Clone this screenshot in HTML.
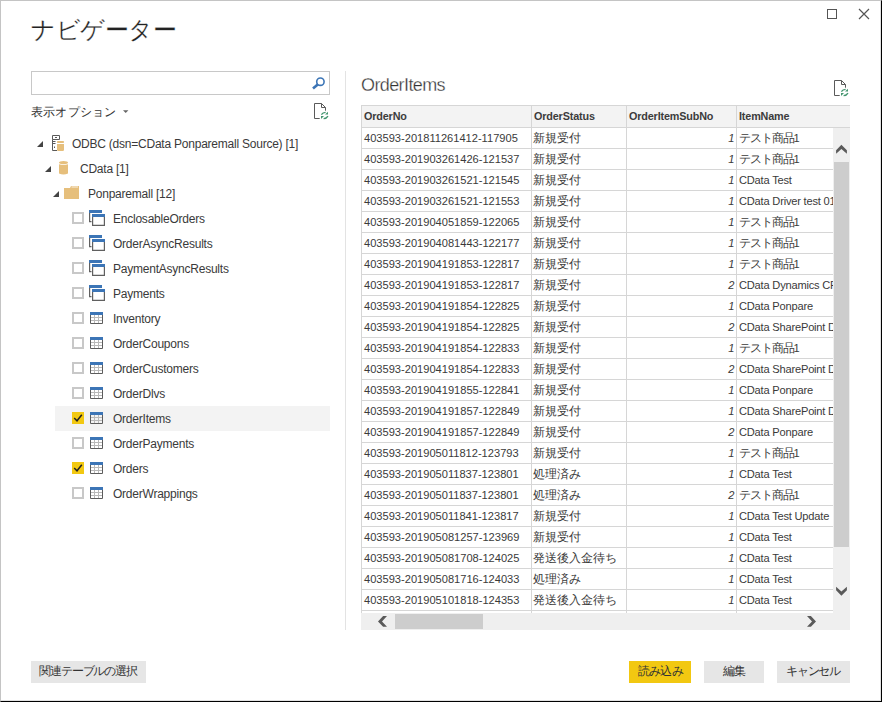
<!DOCTYPE html>
<html><head><meta charset="utf-8"><style>
*{margin:0;padding:0;box-sizing:border-box}
html,body{width:882px;height:702px;overflow:hidden;background:#fff}
body{position:relative;font-family:"Liberation Sans",sans-serif;color:#333}
.a{position:absolute}
.frame{position:absolute;left:0;top:0;width:882px;height:702px;border-top:1px solid #c4c4c4;border-left:1px solid #c4c4c4;border-right:1px solid #000;border-bottom:1px solid #000}
.title{position:absolute;left:31px;top:13px;font-size:23.8px;letter-spacing:-0.5px;line-height:34px;color:#222;-webkit-text-stroke:0.25px #fff;white-space:nowrap}
.search{position:absolute;left:31px;top:71px;width:299px;height:24px;border:1px solid #c8c8c8}
.opt{position:absolute;left:31px;top:103px;font-size:12px;letter-spacing:0.2px;line-height:18px;color:#333;white-space:nowrap}
.divider{position:absolute;left:345px;top:71px;width:1px;height:559px;background:#e3e3e3}
.tri{position:absolute;width:6px;height:6px;line-height:0}
.ic{position:absolute;line-height:0}
.tt{position:absolute;font-size:12px;line-height:25px;letter-spacing:-0.23px;margin-top:1px;color:#3a3a3a;white-space:nowrap}
.cb{position:absolute;left:72px;width:12px;height:12px;border:2px solid #c8c8c8;background:#fff;line-height:0}
.cb.on{border:none;background:#f2c811}
.sel{position:absolute;left:55px;width:275px;height:25px;background:#f3f3f3}
.ptitle{position:absolute;left:361px;top:75px;font-size:18px;line-height:20px;letter-spacing:-0.6px;color:#333;-webkit-text-stroke:0.3px #fff;white-space:nowrap}
.tblwrap{position:absolute;left:0;top:0;width:882px;height:702px;overflow:hidden}
.clip{position:absolute;left:361px;top:105px;width:472px;height:508px;overflow:hidden}
.clip > div{position:absolute}
.th{top:0;font-size:10.8px;letter-spacing:-0.15px;font-weight:bold;line-height:22px;color:#3c3c3c;white-space:nowrap}
.td{font-size:11.1px;line-height:21px;margin-top:1px;color:#3a3a3a;white-space:nowrap}
.num{text-align:right;font-style:italic}
.jp{font-size:12.4px}
.jk{font-size:12.4px;letter-spacing:-1.1px}
.it{letter-spacing:-0.2px}
.hl{left:0;width:472px;height:1px;background:#d6d6d6}
.vl{top:0;width:1px;height:508px;background:#d6d6d6}
.vsb{position:absolute;left:833px;top:128px;width:17px;height:502px;background:#efefef}
.vthumb{position:absolute;left:834px;top:162px;width:15px;height:385px;background:#cdcdcd}
.hsb{position:absolute;left:361px;top:613px;width:472px;height:17px;background:#efefef}
.hthumb{position:absolute;left:395px;top:614px;width:88px;height:15px;background:#cdcdcd}
.btn{position:absolute;top:661px;height:22px;background:#e6e6e6;font-size:11.8px;line-height:21px;letter-spacing:-0.7px;text-indent:0.5px;text-align:center;color:#333;white-space:nowrap}
.btn.y{background:#f2c811}
</style></head><body>
<div class="frame"></div>
<div class="a" style="left:880px;top:1px;width:1px;height:700px;background:#e2e2e2"></div>
<div class="a" style="left:1px;top:700px;width:880px;height:1px;background:#e2e2e2"></div>
<div class="title">ナビゲーター</div>
<div class="a" style="left:827px;top:9px;width:10px;height:10px;border:1px solid #555"></div>
<div class="a" style="left:858px;top:8px;line-height:0"><svg width="12" height="12" viewBox="0 0 12 12"><path d="M1 1L11 11M11 1L1 11" stroke="#555" stroke-width="1.2"/></svg></div>
<div class="search"></div>
<div class="a" style="left:311px;top:76px;line-height:0"><svg width="14" height="14" viewBox="0 0 14 14"><circle cx="9.4" cy="5.7" r="3.7" stroke="#3c75b6" stroke-width="1.6" fill="none"/><path d="M7 8.2L2 12.6" stroke="#3c75b6" stroke-width="2.6"/></svg></div>
<div class="opt">表示オプション</div>
<div class="a" style="left:123px;top:109px;line-height:0"><svg width="6" height="4" viewBox="0 0 6 4"><path d="M0 0.2H5.4L2.7 2.9Z" fill="#666"/></svg></div>
<div class="a" style="left:313px;top:102px;line-height:0"><svg width="16" height="18" viewBox="0 0 16 18"><path d="M6.7 16.5H1.5V1.5H8.5L12.5 5.5V8.7" stroke="#5a5a5a" stroke-width="1" fill="none"/><path d="M8.5 1.5V5.5H12.5" stroke="#5a5a5a" stroke-width="1" fill="none"/><path d="M8.4 12.6Q9.8 10.3 12.6 10.3" stroke="#43956f" stroke-width="1.3" fill="none"/><path d="M12 12.6H15V9.8Z" fill="#43956f"/><path d="M15 14.2Q13.6 16.6 10.6 16.6" stroke="#43956f" stroke-width="1.3" fill="none"/><path d="M8 14V17L11 14Z" fill="#43956f"/></svg></div>
<div class="divider"></div>
<div class="tri" style="left:37px;top:141px"><svg width="6" height="6" viewBox="0 0 6 6"><path d="M6 0V6H0Z" fill="#444"/></svg></div><div class="ic" style="left:52px;top:135px"><svg width="13" height="16" viewBox="0 0 13 16">
<path d="M0.5 0.5H7.5V4.5H0.5Z M0.5 4.5V15.5H5" stroke="#5a5a5a" stroke-width="1" fill="none"/>
<path d="M3 2.5H5" stroke="#5a5a5a" stroke-width="1"/>
<path d="M1 6.5H3.5M1 8.5H3.5" stroke="#5a5a5a" stroke-width="1"/>
<path d="M2.5 11.5V13" stroke="#5a5a5a" stroke-width="1"/>
<rect x="5" y="6" width="7" height="2" rx="0.8" fill="#e6bf7c"/>
<path d="M5 9H12V14.8Q12 16 10.8 16H6.2Q5 16 5 14.8Z" fill="#e6bf7c"/>
</svg></div><div class="tt" style="left:72px;top:131px">ODBC (dsn=CData Ponparemall Source) [1]</div><div class="tri" style="left:45px;top:166px"><svg width="6" height="6" viewBox="0 0 6 6"><path d="M6 0V6H0Z" fill="#444"/></svg></div><div class="ic" style="left:59px;top:161px"><svg width="9" height="14" viewBox="0 0 9 14">
<ellipse cx="4.5" cy="1.6" rx="4.5" ry="1.6" fill="#e6bf7c"/>
<path d="M0 3.2Q4.5 4.6 9 3.2V12.4Q4.5 14.4 0 12.4Z" fill="#e6bf7c"/>
</svg></div><div class="tt" style="left:80px;top:156px">CData [1]</div><div class="tri" style="left:53px;top:191px"><svg width="6" height="6" viewBox="0 0 6 6"><path d="M6 0V6H0Z" fill="#444"/></svg></div><div class="ic" style="left:64px;top:186px"><svg width="15" height="13" viewBox="0 0 15 13">
<path d="M0 2H6L7 0H15V13H0Z" fill="#e6bf7c"/>
<path d="M7.5 1H14" stroke="#fff" stroke-width="0.8"/>
</svg></div><div class="tt" style="left:88px;top:181px">Ponparemall [12]</div><div class="cb" style="top:212px"></div><div class="ic" style="left:89px;top:210px"><svg width="17" height="17" viewBox="0 0 17 17"><rect x="0" y="0" width="13" height="3" fill="#3c75b6"/><path d="M0.6 3V11.6H2.5" stroke="#606060" stroke-width="1.2" fill="none"/><rect x="3" y="4" width="13" height="3" fill="#3c75b6"/><path d="M3.6 7V15.4H15.4V7" stroke="#606060" stroke-width="1.2" fill="none"/></svg></div><div class="tt" style="left:113px;top:206px">EnclosableOrders</div><div class="cb" style="top:237px"></div><div class="ic" style="left:89px;top:235px"><svg width="17" height="17" viewBox="0 0 17 17"><rect x="0" y="0" width="13" height="3" fill="#3c75b6"/><path d="M0.6 3V11.6H2.5" stroke="#606060" stroke-width="1.2" fill="none"/><rect x="3" y="4" width="13" height="3" fill="#3c75b6"/><path d="M3.6 7V15.4H15.4V7" stroke="#606060" stroke-width="1.2" fill="none"/></svg></div><div class="tt" style="left:113px;top:231px">OrderAsyncResults</div><div class="cb" style="top:262px"></div><div class="ic" style="left:89px;top:260px"><svg width="17" height="17" viewBox="0 0 17 17"><rect x="0" y="0" width="13" height="3" fill="#3c75b6"/><path d="M0.6 3V11.6H2.5" stroke="#606060" stroke-width="1.2" fill="none"/><rect x="3" y="4" width="13" height="3" fill="#3c75b6"/><path d="M3.6 7V15.4H15.4V7" stroke="#606060" stroke-width="1.2" fill="none"/></svg></div><div class="tt" style="left:113px;top:256px">PaymentAsyncResults</div><div class="cb" style="top:287px"></div><div class="ic" style="left:89px;top:285px"><svg width="17" height="17" viewBox="0 0 17 17"><rect x="0" y="0" width="13" height="3" fill="#3c75b6"/><path d="M0.6 3V11.6H2.5" stroke="#606060" stroke-width="1.2" fill="none"/><rect x="3" y="4" width="13" height="3" fill="#3c75b6"/><path d="M3.6 7V15.4H15.4V7" stroke="#606060" stroke-width="1.2" fill="none"/></svg></div><div class="tt" style="left:113px;top:281px">Payments</div><div class="cb" style="top:312px"></div><div class="ic" style="left:90px;top:312px"><svg width="13" height="12" viewBox="0 0 13 12"><rect x="0" y="0" width="13" height="3" fill="#3c75b6"/><path d="M4.5 3V11M8.5 3V11M1 5.5H12M1 8.5H12" stroke="#b9b9b9" stroke-width="1" fill="none"/><path d="M0.5 3V11.5H12.5V3" stroke="#5c5c5c" stroke-width="1" fill="none"/></svg></div><div class="tt" style="left:113px;top:306px">Inventory</div><div class="cb" style="top:337px"></div><div class="ic" style="left:90px;top:337px"><svg width="13" height="12" viewBox="0 0 13 12"><rect x="0" y="0" width="13" height="3" fill="#3c75b6"/><path d="M4.5 3V11M8.5 3V11M1 5.5H12M1 8.5H12" stroke="#b9b9b9" stroke-width="1" fill="none"/><path d="M0.5 3V11.5H12.5V3" stroke="#5c5c5c" stroke-width="1" fill="none"/></svg></div><div class="tt" style="left:113px;top:331px">OrderCoupons</div><div class="cb" style="top:362px"></div><div class="ic" style="left:90px;top:362px"><svg width="13" height="12" viewBox="0 0 13 12"><rect x="0" y="0" width="13" height="3" fill="#3c75b6"/><path d="M4.5 3V11M8.5 3V11M1 5.5H12M1 8.5H12" stroke="#b9b9b9" stroke-width="1" fill="none"/><path d="M0.5 3V11.5H12.5V3" stroke="#5c5c5c" stroke-width="1" fill="none"/></svg></div><div class="tt" style="left:113px;top:356px">OrderCustomers</div><div class="cb" style="top:387px"></div><div class="ic" style="left:90px;top:387px"><svg width="13" height="12" viewBox="0 0 13 12"><rect x="0" y="0" width="13" height="3" fill="#3c75b6"/><path d="M4.5 3V11M8.5 3V11M1 5.5H12M1 8.5H12" stroke="#b9b9b9" stroke-width="1" fill="none"/><path d="M0.5 3V11.5H12.5V3" stroke="#5c5c5c" stroke-width="1" fill="none"/></svg></div><div class="tt" style="left:113px;top:381px">OrderDlvs</div><div class="sel" style="top:406px"></div><div class="cb on" style="top:412px"><svg width="12" height="12" viewBox="0 0 12 12"><path d="M2.2 6L5 8.8L9.8 2.7" stroke="#222" stroke-width="1.5" fill="none"/></svg></div><div class="ic" style="left:90px;top:412px"><svg width="13" height="12" viewBox="0 0 13 12"><rect x="0" y="0" width="13" height="3" fill="#3c75b6"/><path d="M4.5 3V11M8.5 3V11M1 5.5H12M1 8.5H12" stroke="#b9b9b9" stroke-width="1" fill="none"/><path d="M0.5 3V11.5H12.5V3" stroke="#5c5c5c" stroke-width="1" fill="none"/></svg></div><div class="tt" style="left:113px;top:406px">OrderItems</div><div class="cb" style="top:437px"></div><div class="ic" style="left:90px;top:437px"><svg width="13" height="12" viewBox="0 0 13 12"><rect x="0" y="0" width="13" height="3" fill="#3c75b6"/><path d="M4.5 3V11M8.5 3V11M1 5.5H12M1 8.5H12" stroke="#b9b9b9" stroke-width="1" fill="none"/><path d="M0.5 3V11.5H12.5V3" stroke="#5c5c5c" stroke-width="1" fill="none"/></svg></div><div class="tt" style="left:113px;top:431px">OrderPayments</div><div class="cb on" style="top:462px"><svg width="12" height="12" viewBox="0 0 12 12"><path d="M2.2 6L5 8.8L9.8 2.7" stroke="#222" stroke-width="1.5" fill="none"/></svg></div><div class="ic" style="left:90px;top:462px"><svg width="13" height="12" viewBox="0 0 13 12"><rect x="0" y="0" width="13" height="3" fill="#3c75b6"/><path d="M4.5 3V11M8.5 3V11M1 5.5H12M1 8.5H12" stroke="#b9b9b9" stroke-width="1" fill="none"/><path d="M0.5 3V11.5H12.5V3" stroke="#5c5c5c" stroke-width="1" fill="none"/></svg></div><div class="tt" style="left:113px;top:456px">Orders</div><div class="cb" style="top:487px"></div><div class="ic" style="left:90px;top:487px"><svg width="13" height="12" viewBox="0 0 13 12"><rect x="0" y="0" width="13" height="3" fill="#3c75b6"/><path d="M4.5 3V11M8.5 3V11M1 5.5H12M1 8.5H12" stroke="#b9b9b9" stroke-width="1" fill="none"/><path d="M0.5 3V11.5H12.5V3" stroke="#5c5c5c" stroke-width="1" fill="none"/></svg></div><div class="tt" style="left:113px;top:481px">OrderWrappings</div>
<div class="ptitle">OrderItems</div>
<div class="a" style="left:833px;top:79px;line-height:0"><svg width="16" height="18" viewBox="0 0 16 18"><path d="M6.7 16.5H1.5V1.5H8.5L12.5 5.5V8.7" stroke="#5a5a5a" stroke-width="1" fill="none"/><path d="M8.5 1.5V5.5H12.5" stroke="#5a5a5a" stroke-width="1" fill="none"/><path d="M8.4 12.6Q9.8 10.3 12.6 10.3" stroke="#43956f" stroke-width="1.3" fill="none"/><path d="M12 12.6H15V9.8Z" fill="#43956f"/><path d="M15 14.2Q13.6 16.6 10.6 16.6" stroke="#43956f" stroke-width="1.3" fill="none"/><path d="M8 14V17L11 14Z" fill="#43956f"/></svg></div>
<div class="a" style="left:361px;top:105px;width:489px;height:23px;background:#f3f3f3;border-top:1px solid #d6d6d6;border-bottom:1px solid #d6d6d6"></div>
<div class="clip">
<div class="hl" style="top:22px"></div><div class="hl" style="top:43px"></div><div class="hl" style="top:64px"></div><div class="hl" style="top:85px"></div><div class="hl" style="top:106px"></div><div class="hl" style="top:127px"></div><div class="hl" style="top:148px"></div><div class="hl" style="top:169px"></div><div class="hl" style="top:190px"></div><div class="hl" style="top:211px"></div><div class="hl" style="top:232px"></div><div class="hl" style="top:253px"></div><div class="hl" style="top:274px"></div><div class="hl" style="top:295px"></div><div class="hl" style="top:316px"></div><div class="hl" style="top:337px"></div><div class="hl" style="top:358px"></div><div class="hl" style="top:379px"></div><div class="hl" style="top:400px"></div><div class="hl" style="top:421px"></div><div class="hl" style="top:442px"></div><div class="hl" style="top:463px"></div><div class="hl" style="top:484px"></div><div class="hl" style="top:505px"></div><div class="vl" style="left:0px"></div><div class="vl" style="left:170px"></div><div class="vl" style="left:265px"></div><div class="vl" style="left:375px"></div>
<div class="th" style="left:3px">OrderNo</div><div class="th" style="left:173px">OrderStatus</div><div class="th" style="left:268px">OrderItemSubNo</div><div class="th" style="left:378px">ItemName</div><div class="td" style="left:3px;top:22px">403593-201811261412-117905</div><div class="td jp" style="left:172px;top:22px">新規受付</div><div class="td num" style="left:265px;width:108.5px;top:22px">1</div><div class="td it" style="left:378px;top:22px"><span class="jk">テスト商品</span>1</div><div class="td" style="left:3px;top:43px">403593-201903261426-121537</div><div class="td jp" style="left:172px;top:43px">新規受付</div><div class="td num" style="left:265px;width:108.5px;top:43px">1</div><div class="td it" style="left:378px;top:43px"><span class="jk">テスト商品</span>1</div><div class="td" style="left:3px;top:64px">403593-201903261521-121545</div><div class="td jp" style="left:172px;top:64px">新規受付</div><div class="td num" style="left:265px;width:108.5px;top:64px">1</div><div class="td it" style="left:378px;top:64px">CData Test</div><div class="td" style="left:3px;top:85px">403593-201903261521-121553</div><div class="td jp" style="left:172px;top:85px">新規受付</div><div class="td num" style="left:265px;width:108.5px;top:85px">1</div><div class="td it" style="left:378px;top:85px">CData Driver test 01</div><div class="td" style="left:3px;top:106px">403593-201904051859-122065</div><div class="td jp" style="left:172px;top:106px">新規受付</div><div class="td num" style="left:265px;width:108.5px;top:106px">1</div><div class="td it" style="left:378px;top:106px"><span class="jk">テスト商品</span>1</div><div class="td" style="left:3px;top:127px">403593-201904081443-122177</div><div class="td jp" style="left:172px;top:127px">新規受付</div><div class="td num" style="left:265px;width:108.5px;top:127px">1</div><div class="td it" style="left:378px;top:127px"><span class="jk">テスト商品</span>1</div><div class="td" style="left:3px;top:148px">403593-201904191853-122817</div><div class="td jp" style="left:172px;top:148px">新規受付</div><div class="td num" style="left:265px;width:108.5px;top:148px">1</div><div class="td it" style="left:378px;top:148px"><span class="jk">テスト商品</span>1</div><div class="td" style="left:3px;top:169px">403593-201904191853-122817</div><div class="td jp" style="left:172px;top:169px">新規受付</div><div class="td num" style="left:265px;width:108.5px;top:169px">2</div><div class="td it" style="left:378px;top:169px">CData Dynamics CRM</div><div class="td" style="left:3px;top:190px">403593-201904191854-122825</div><div class="td jp" style="left:172px;top:190px">新規受付</div><div class="td num" style="left:265px;width:108.5px;top:190px">1</div><div class="td it" style="left:378px;top:190px">CData Ponpare</div><div class="td" style="left:3px;top:211px">403593-201904191854-122825</div><div class="td jp" style="left:172px;top:211px">新規受付</div><div class="td num" style="left:265px;width:108.5px;top:211px">2</div><div class="td it" style="left:378px;top:211px">CData SharePoint D</div><div class="td" style="left:3px;top:232px">403593-201904191854-122833</div><div class="td jp" style="left:172px;top:232px">新規受付</div><div class="td num" style="left:265px;width:108.5px;top:232px">1</div><div class="td it" style="left:378px;top:232px"><span class="jk">テスト商品</span>1</div><div class="td" style="left:3px;top:253px">403593-201904191854-122833</div><div class="td jp" style="left:172px;top:253px">新規受付</div><div class="td num" style="left:265px;width:108.5px;top:253px">2</div><div class="td it" style="left:378px;top:253px">CData SharePoint D</div><div class="td" style="left:3px;top:274px">403593-201904191855-122841</div><div class="td jp" style="left:172px;top:274px">新規受付</div><div class="td num" style="left:265px;width:108.5px;top:274px">1</div><div class="td it" style="left:378px;top:274px">CData Ponpare</div><div class="td" style="left:3px;top:295px">403593-201904191857-122849</div><div class="td jp" style="left:172px;top:295px">新規受付</div><div class="td num" style="left:265px;width:108.5px;top:295px">1</div><div class="td it" style="left:378px;top:295px">CData SharePoint D</div><div class="td" style="left:3px;top:316px">403593-201904191857-122849</div><div class="td jp" style="left:172px;top:316px">新規受付</div><div class="td num" style="left:265px;width:108.5px;top:316px">2</div><div class="td it" style="left:378px;top:316px">CData Ponpare</div><div class="td" style="left:3px;top:337px">403593-201905011812-123793</div><div class="td jp" style="left:172px;top:337px">新規受付</div><div class="td num" style="left:265px;width:108.5px;top:337px">1</div><div class="td it" style="left:378px;top:337px"><span class="jk">テスト商品</span>1</div><div class="td" style="left:3px;top:358px">403593-201905011837-123801</div><div class="td jp" style="left:172px;top:358px">処理済み</div><div class="td num" style="left:265px;width:108.5px;top:358px">1</div><div class="td it" style="left:378px;top:358px">CData Test</div><div class="td" style="left:3px;top:379px">403593-201905011837-123801</div><div class="td jp" style="left:172px;top:379px">処理済み</div><div class="td num" style="left:265px;width:108.5px;top:379px">2</div><div class="td it" style="left:378px;top:379px"><span class="jk">テスト商品</span>1</div><div class="td" style="left:3px;top:400px">403593-201905011841-123817</div><div class="td jp" style="left:172px;top:400px">新規受付</div><div class="td num" style="left:265px;width:108.5px;top:400px">1</div><div class="td it" style="left:378px;top:400px">CData Test Update</div><div class="td" style="left:3px;top:421px">403593-201905081257-123969</div><div class="td jp" style="left:172px;top:421px">新規受付</div><div class="td num" style="left:265px;width:108.5px;top:421px">1</div><div class="td it" style="left:378px;top:421px">CData Test</div><div class="td" style="left:3px;top:442px">403593-201905081708-124025</div><div class="td jp" style="left:172px;top:442px">発送後入金待ち</div><div class="td num" style="left:265px;width:108.5px;top:442px">1</div><div class="td it" style="left:378px;top:442px">CData Test</div><div class="td" style="left:3px;top:463px">403593-201905081716-124033</div><div class="td jp" style="left:172px;top:463px">処理済み</div><div class="td num" style="left:265px;width:108.5px;top:463px">1</div><div class="td it" style="left:378px;top:463px">CData Test</div><div class="td" style="left:3px;top:484px">403593-201905101818-124353</div><div class="td jp" style="left:172px;top:484px">発送後入金待ち</div><div class="td num" style="left:265px;width:108.5px;top:484px">1</div><div class="td it" style="left:378px;top:484px">CData Test</div>
</div>
<div class="vsb"></div><div class="vthumb"></div>
<div class="hsb"></div><div class="hthumb"></div>
<div class="a" style="left:0;top:0;line-height:0"><svg width="882" height="702" viewBox="0 0 882 702" style="position:absolute;left:0;top:0">
<path d="M841.4 144.7L846.9 150.2V153.8L841.4 148.9L836.1 153.8V150.2Z" fill="#5a5a5a"/>
<path d="M841.4 595.8L846.9 590.3V586.7L841.4 591.6L836.1 586.7V590.3Z" fill="#5a5a5a"/>
<path d="M378 621.4L383.1 616.1H387L382 621.4L387 626.8H383.1Z" fill="#5a5a5a"/>
<path d="M816 621.4L810.9 616.1H807L812 621.4L807 626.8H810.9Z" fill="#5a5a5a"/>
</svg></div>
<div class="btn" style="left:31px;width:115px;letter-spacing:-1.1px;text-indent:-1px">関連テーブルの選択</div>
<div class="btn y" style="left:629px;width:62px">読み込み</div>
<div class="btn" style="left:704px;width:60px">編集</div>
<div class="btn" style="left:777px;width:73px;letter-spacing:-1.1px;text-indent:-1px">キャンセル</div>
</body></html>
